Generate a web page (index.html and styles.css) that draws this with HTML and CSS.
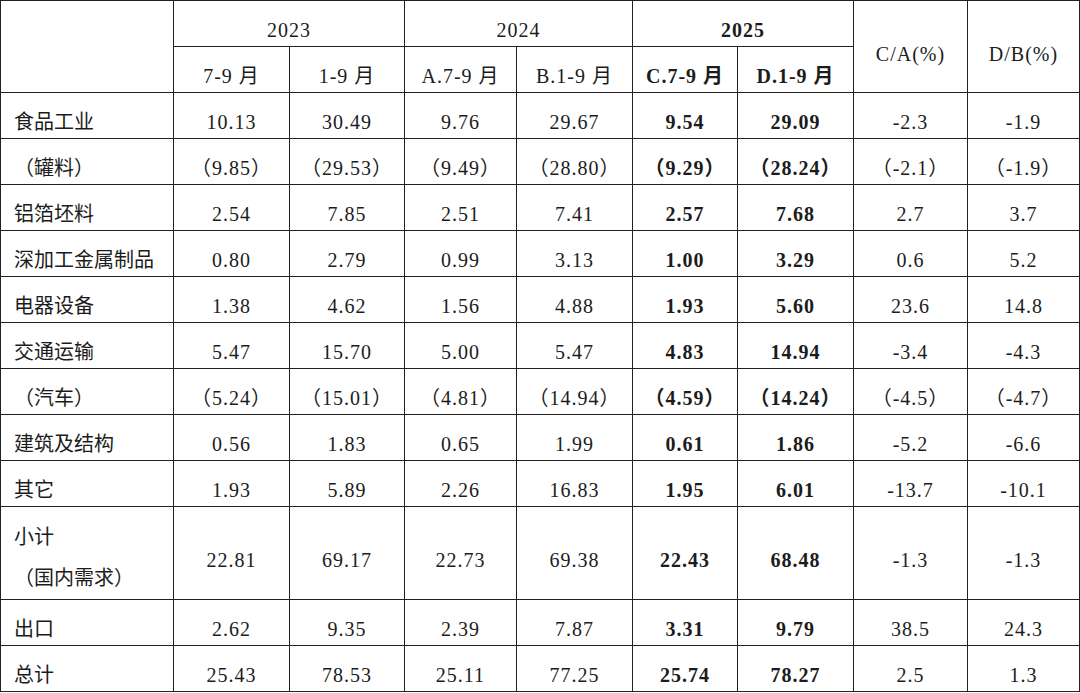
FILE: index.html
```html
<!DOCTYPE html>
<html lang="zh-CN">
<head>
<meta charset="utf-8">
<title>铝消费统计</title>
<link rel="stylesheet" href="styles.css">
</head>
<body>
<table class="data">
  <colgroup>
    <col class="c0"><col class="c1"><col class="c2"><col class="c3"><col class="c4"><col class="c5"><col class="c6"><col class="c7"><col class="c8">
  </colgroup>
  <thead>
    <tr class="row">
      <th rowspan="2" class="label"></th>
      <th colspan="2">2023</th>
      <th colspan="2">2024</th>
      <th colspan="2" class="b">2025</th>
      <th rowspan="2" class="ratio">C/A(%)</th>
      <th rowspan="2" class="ratio">D/B(%)</th>
    </tr>
    <tr class="row">
      <th>7-9 月</th>
      <th>1-9 月</th>
      <th>A.7-9 月</th>
      <th>B.1-9 月</th>
      <th class="b">C.7-9 月</th>
      <th class="b">D.1-9 月</th>
    </tr>
  </thead>
  <tbody>
    <tr class="row"><td class="label">食品工业</td><td>10.13</td><td>30.49</td><td>9.76</td><td>29.67</td><td class="b">9.54</td><td class="b">29.09</td><td>-2.3</td><td>-1.9</td></tr>
    <tr class="row"><td class="label">（罐料）</td><td>（9.85）</td><td>（29.53）</td><td>（9.49）</td><td>（28.80）</td><td class="b">（9.29）</td><td class="b">（28.24）</td><td>（-2.1）</td><td>（-1.9）</td></tr>
    <tr class="row"><td class="label">铝箔坯料</td><td>2.54</td><td>7.85</td><td>2.51</td><td>7.41</td><td class="b">2.57</td><td class="b">7.68</td><td>2.7</td><td>3.7</td></tr>
    <tr class="row"><td class="label">深加工金属制品</td><td>0.80</td><td>2.79</td><td>0.99</td><td>3.13</td><td class="b">1.00</td><td class="b">3.29</td><td>0.6</td><td>5.2</td></tr>
    <tr class="row"><td class="label">电器设备</td><td>1.38</td><td>4.62</td><td>1.56</td><td>4.88</td><td class="b">1.93</td><td class="b">5.60</td><td>23.6</td><td>14.8</td></tr>
    <tr class="row"><td class="label">交通运输</td><td>5.47</td><td>15.70</td><td>5.00</td><td>5.47</td><td class="b">4.83</td><td class="b">14.94</td><td>-3.4</td><td>-4.3</td></tr>
    <tr class="row"><td class="label">（汽车）</td><td>（5.24）</td><td>（15.01）</td><td>（4.81）</td><td>（14.94）</td><td class="b">（4.59）</td><td class="b">（14.24）</td><td>（-4.5）</td><td>（-4.7）</td></tr>
    <tr class="row"><td class="label">建筑及结构</td><td>0.56</td><td>1.83</td><td>0.65</td><td>1.99</td><td class="b">0.61</td><td class="b">1.86</td><td>-5.2</td><td>-6.6</td></tr>
    <tr class="row"><td class="label">其它</td><td>1.93</td><td>5.89</td><td>2.26</td><td>16.83</td><td class="b">1.95</td><td class="b">6.01</td><td>-13.7</td><td>-10.1</td></tr>
    <tr class="row tall"><td class="label two"><span class="ln">小计</span><span class="ln">（国内需求）</span></td><td>22.81</td><td>69.17</td><td>22.73</td><td>69.38</td><td class="b">22.43</td><td class="b">68.48</td><td>-1.3</td><td>-1.3</td></tr>
    <tr class="row"><td class="label">出口</td><td>2.62</td><td>9.35</td><td>2.39</td><td>7.87</td><td class="b">3.31</td><td class="b">9.79</td><td>38.5</td><td>24.3</td></tr>
    <tr class="row"><td class="label">总计</td><td>25.43</td><td>78.53</td><td>25.11</td><td>77.25</td><td class="b">25.74</td><td class="b">78.27</td><td>2.5</td><td>1.3</td></tr>
  </tbody>
</table>
</body>
</html>
```

FILE: styles.css
```css
html, body {
  margin: 0;
  padding: 0;
  background: #ffffff;
}

.data {
  border-collapse: collapse;
  table-layout: fixed;
  width: 1079px;
  font-family: "Liberation Serif", "Noto Sans CJK SC", serif;
  font-size: 20px;
  color: #1c1c1c;
}

.c0 { width: 173px; }
.c1 { width: 116px; }
.c2 { width: 115px; }
.c3 { width: 112px; }
.c4 { width: 116px; }
.c5 { width: 105px; }
.c6 { width: 116px; }
.c7 { width: 114px; }
.c8 { width: 112px; }

.data th,
.data td {
  border: 1px solid #222222;
  padding: 13px 2px 0 2px;
  text-align: center;
  vertical-align: middle;
  font-weight: normal;
  line-height: 24px;
  white-space: nowrap;
  letter-spacing: 1px;
}

.row { height: 46px; }
.row.tall { height: 92px; }

.data .label {
  text-align: left;
  padding-left: 13px;
  letter-spacing: 0;
}

.data .ratio {
  padding-top: 14px;
}

.data .b {
  font-weight: bold;
}

.data .two {
  padding-top: 10px;
}

.ln {
  display: block;
  line-height: 41px;
}
```
